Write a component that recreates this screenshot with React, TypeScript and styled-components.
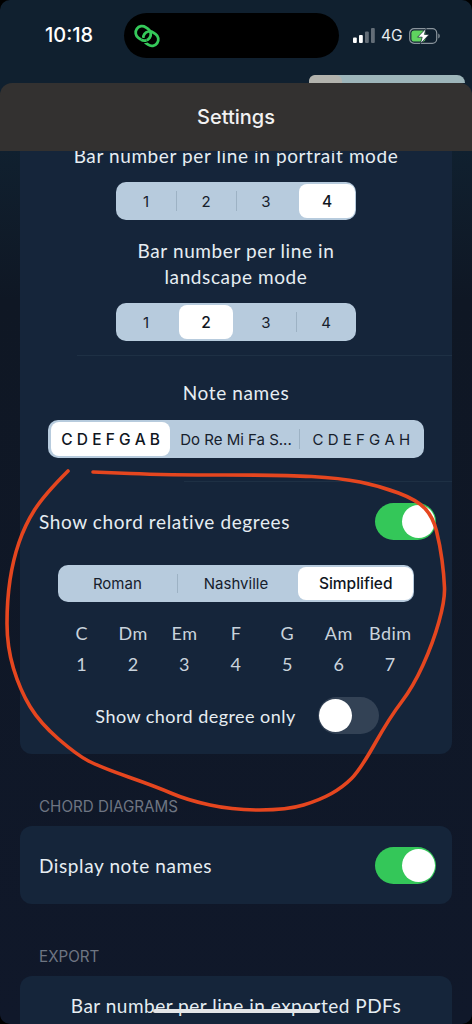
import styled, { createGlobalStyle } from 'styled-components';

const GlobalStyle = createGlobalStyle`
  html, body {
    margin: 0;
    padding: 0;
    background: #000;
  }
  * {
    box-sizing: border-box;
  }
`;

const CHORDS = [
  ['C', '1'],
  ['Dm', '2'],
  ['Em', '3'],
  ['F', '4'],
  ['G', '5'],
  ['Am', '6'],
  ['Bdim', '7'],
];

// the red pen stroke, smoothed through these points when drawn
const PEN_POINTS = [
  [68, 471], [44, 495], [25, 525], [13, 560], [7, 600], [7, 647], [20, 690], [40, 723],
  [77, 755], [100, 767], [157, 787], [187, 800], [233, 810], [287, 810], [320, 800],
  [343, 787], [360, 770], [390, 717], [413, 687], [433, 643], [445, 600], [444, 575],
  [440, 545], [433, 517], [417, 500], [380, 486], [340, 478], [283, 475], [167, 475], [93, 472],
];

function penPath(points) {
  let d = `M${points[0][0]} ${points[0][1]}`;
  for (let i = 1; i < points.length - 1; i++) {
    const midX = (points[i][0] + points[i + 1][0]) / 2;
    const midY = (points[i][1] + points[i + 1][1]) / 2;
    d += ` Q${points[i][0]} ${points[i][1]} ${midX} ${midY}`;
  }
  const last = points[points.length - 1];
  return `${d} L${last[0]} ${last[1]}`;
}

function Segmented({ options, active, width, height = 38, fontSize = 15, dividers = [] }) {
  return (
    <SegmentedWrapper $width={width} $height={height}>
      {options.map((option, index) => (
        <Segment key={option} $divider={dividers.includes(index)} $fontSize={fontSize}>
          {index === active ? (
            <ActiveSegment $last={index === options.length - 1}>{option}</ActiveSegment>
          ) : (
            option
          )}
        </Segment>
      ))}
    </SegmentedWrapper>
  );
}

function Toggle({ on }) {
  return (
    <ToggleTrack $on={on}>
      <ToggleKnob />
    </ToggleTrack>
  );
}

function LinkedRings() {
  return (
    <svg width="28" height="24" viewBox="0 0 28 24" fill="none" stroke="#35c95a" strokeWidth="3">
      <g transform="translate(14 12) rotate(35) scale(0.92)">
        <rect x="-13.5" y="-7" width="17" height="14" rx="7" />
        <rect x="-3.5" y="-7" width="17" height="14" rx="7" />
        <path d="M2.23 4.01A7 7 0 0 1-2.89 6.97" stroke="#000" strokeWidth="5.4" />
        <path d="M2.23 4.01A7 7 0 0 1-2.89 6.97" />
      </g>
    </svg>
  );
}

function App() {
  return (
    <>
      <GlobalStyle />
      <Screen>
        <StatusBar>
          <Time>10:18</Time>
          <Island>
            <LinkedRings />
          </Island>
          <StatusRight>
            <svg width="22" height="15" viewBox="0 0 22 15" fill="#fff">
              <rect x="0" y="9.5" width="3.8" height="5.5" rx="1" />
              <rect x="6" y="7" width="3.8" height="8" rx="1" />
              <rect x="12" y="3.5" width="3.8" height="11.5" rx="1" opacity="0.35" />
              <rect x="18" y="0" width="3.8" height="15" rx="1" opacity="0.35" />
            </svg>
            <Network>4G</Network>
            <svg width="31" height="16" viewBox="0 0 31 16" fill="none">
              <rect x="0.7" y="0.7" width="27" height="14.6" rx="4.4" stroke="#8a949c" strokeWidth="1.2" />
              <rect x="2.4" y="2.4" width="14" height="11.2" rx="2.8" fill="#5fd35f" />
              <path d="M29.3 5.6c1 .4 1.4 1.3 1.4 2.4s-.4 2-1.4 2.4z" fill="#8a949c" />
              <path d="M17.2 0.2L8.6 9.2h4.6l-1.8 6.6 8.8-9.4h-4.8z" fill="#fff" stroke="#10202f" strokeWidth="0.7" />
            </svg>
          </StatusRight>
        </StatusBar>
        <PeekRow>
          <Peek>
            <PeekThumb />
          </Peek>
        </PeekRow>
        <Header>Settings</Header>
        <Body>
          <TopCard>
            <CenterLabel $bottom={13}>Bar number per line in portrait mode</CenterLabel>
            <Segmented options={['1', '2', '3', '4']} active={3} width={240} dividers={[1, 2]} />
            <CenterLabel $top={18} $bottom={13}>
              Bar number per line in
              <br />
              landscape mode
            </CenterLabel>
            <Segmented options={['1', '2', '3', '4']} active={1} width={240} dividers={[3]} />
            <Divider $inset={57} $top={14} />
            <CenterLabel $top={24} $bottom={14}>Note names</CenterLabel>
            <Segmented
              options={['C D E F G A B', 'Do Re Mi Fa S...', 'C D E F G A H']}
              active={0}
              width={376}
              dividers={[2]}
            />
            <Divider $inset={164} $top={23} />
            <SwitchRow>
              <RowText>Show chord relative degrees</RowText>
              <Toggle on />
            </SwitchRow>
            <SegmentSpacer>
              <Segmented options={['Roman', 'Nashville', 'Simplified']} active={2} width={356} height={37} dividers={[1]} />
            </SegmentSpacer>
            <ChordGrid>
              {CHORDS.map(([chord, degree]) => (
                <ChordColumn key={chord}>
                  <span>{chord}</span>
                  <span>{degree}</span>
                </ChordColumn>
              ))}
            </ChordGrid>
            <DegreeRow>
              <DegreeText>Show chord degree only</DegreeText>
              <Toggle on={false} />
            </DegreeRow>
          </TopCard>

          <SectionTitle>CHORD DIAGRAMS</SectionTitle>
          <Card>
            <DiagramRow>
              <RowText>Display note names</RowText>
              <Toggle on />
            </DiagramRow>
          </Card>

          <SectionTitle>EXPORT</SectionTitle>
          <Card>
            <ExportLabel>Bar number per line in exported PDFs</ExportLabel>
          </Card>
        </Body>

        <PenStroke viewBox="0 0 472 1024" fill="none">
          <path d={penPath(PEN_POINTS)} stroke="#e5461f" strokeWidth="3.6" strokeLinecap="round" strokeLinejoin="round" />
        </PenStroke>
        <HomeIndicator />
      </Screen>
    </>
  );
}

const Screen = styled.div`
  position: relative;
  width: 472px;
  height: 1024px;
  overflow: hidden;
  border-radius: 10px;
  background: linear-gradient(180deg, #10202f 0, #10202f 150px, #0f1724 300px, #10182a 1024px);
  font-family: Lato, 'Noto Sans', sans-serif;
  color: #e6edf2;
`;

const StatusBar = styled.div`
  height: 75px;
  padding: 13px 0 0 45px;
  display: flex;
  align-items: flex-start;
`;

const Time = styled.div`
  width: 79px;
  height: 45px;
  line-height: 44px;
  font-family: Inter, sans-serif;
  font-size: 20px;
  font-weight: 500;
  color: #fff;
`;

const Island = styled.div`
  width: 215px;
  height: 45px;
  border-radius: 23px;
  background: #000;
  display: flex;
  align-items: center;
  padding-left: 9px;
`;

const StatusRight = styled.div`
  height: 45px;
  margin-left: 14px;
  display: flex;
  align-items: center;
  gap: 6px;
`;

const Network = styled.span`
  font-family: Inter, sans-serif;
  font-size: 15.5px;
  font-weight: 400;
  color: #e8edf0;
`;

const PeekRow = styled.div`
  height: 8px;
  display: flex;
  justify-content: flex-end;
  padding-right: 7px;
`;

const Peek = styled.div`
  width: 156px;
  height: 8px;
  border-radius: 8px 8px 0 0;
  background: #9db5ba;
`;

const PeekThumb = styled.div`
  width: 33px;
  height: 8px;
  border-radius: 6px 6px 0 0;
  background: #b3b3ad;
`;

const Header = styled.div`
  position: relative;
  z-index: 2;
  height: 68px;
  border-radius: 12px 12px 0 0;
  background: #333130;
  display: flex;
  align-items: center;
  justify-content: center;
  font-family: Inter, sans-serif;
  font-size: 20px;
  font-weight: 500;
  color: #f2f2f2;
`;

const Body = styled.div`
  padding: 0 20px;
`;

const Card = styled.div`
  border-radius: 12px;
  background: #15253a;
`;

const TopCard = styled(Card)`
  margin-top: -24px;
  height: 627px;
  padding-top: 16px;
  display: flex;
  flex-direction: column;
  align-items: center;
  border-radius: 0 0 12px 12px;
`;

const CenterLabel = styled.div`
  margin-top: ${(p) => p.$top || 0}px;
  margin-bottom: ${(p) => p.$bottom}px;
  font-size: 19px;
  line-height: 26px;
  letter-spacing: 0.6px;
  text-align: center;
  color: #e6edf2;
`;

const SegmentedWrapper = styled.div`
  flex: none;
  width: ${(p) => p.$width}px;
  height: ${(p) => p.$height}px;
  border-radius: 10px;
  background: #b7cbdd;
  display: flex;
`;

const Segment = styled.div`
  position: relative;
  flex: 1 1 0;
  min-width: 0;
  display: flex;
  align-items: center;
  justify-content: center;
  white-space: nowrap;
  font-family: Inter, sans-serif;
  font-size: ${(p) => p.$fontSize}px;
  font-weight: 400;
  color: #16202c;

  &::before {
    content: '';
    display: ${(p) => (p.$divider ? 'block' : 'none')};
    position: absolute;
    left: 0;
    top: 9px;
    bottom: 9px;
    width: 1px;
    background: #9db2c4;
  }
`;

const ActiveSegment = styled.div`
  align-self: stretch;
  flex: 1;
  margin: 2px ${(p) => (p.$last ? 1 : 3)}px 2px 3px;
  border-radius: 8px;
  background: #fff;
  display: flex;
  align-items: center;
  justify-content: center;
  font-size: 15.5px;
  font-weight: 500;
  color: #10161e;
`;

const Divider = styled.div`
  align-self: stretch;
  height: 1px;
  margin-top: ${(p) => p.$top}px;
  margin-left: ${(p) => p.$inset}px;
  background: #1e3044;
`;

const SwitchRow = styled.div`
  align-self: stretch;
  margin-top: 21px;
  padding: 0 16px 0 19px;
  display: flex;
  align-items: center;
  justify-content: space-between;
`;

const RowText = styled.span`
  font-size: 19px;
  letter-spacing: 0.6px;
  color: #e6edf2;
`;

const DegreeText = styled.span`
  font-size: 18px;
  letter-spacing: 0.45px;
  color: #e6edf2;
`;

const SegmentSpacer = styled.div`
  margin-top: 25px;
`;

const ChordGrid = styled.div`
  margin-top: 20px;
  width: 360px;
  display: grid;
  grid-template-columns: repeat(7, 1fr);
`;

const ChordColumn = styled.div`
  display: flex;
  flex-direction: column;
  align-items: center;
  gap: 9px;
  font-size: 18px;
  line-height: 22px;
  letter-spacing: 0.5px;
  color: #c9d3dc;
`;

const DegreeRow = styled.div`
  margin-top: 22px;
  margin-left: 2px;
  display: flex;
  align-items: center;
  gap: 22px;
`;

const ToggleTrack = styled.div`
  flex: none;
  width: 61px;
  height: 37px;
  padding: 2px 1px;
  border-radius: 19px;
  background: ${(p) => (p.$on ? '#34c759' : '#334255')};
  display: flex;
  justify-content: ${(p) => (p.$on ? 'flex-end' : 'flex-start')};
`;

const ToggleKnob = styled.div`
  width: 33px;
  height: 33px;
  border-radius: 50%;
  background: #fff;
`;

const SectionTitle = styled.div`
  margin-top: 44px;
  margin-bottom: 10px;
  padding-left: 19px;
  font-family: Inter, sans-serif;
  font-size: 15.2px;
  line-height: 18px;
  color: #6e7582;
`;

const DiagramRow = styled.div`
  height: 78px;
  padding: 0 16px 0 19px;
  display: flex;
  align-items: center;
  justify-content: space-between;
`;

const ExportLabel = styled.div`
  height: 80px;
  padding-top: 17px;
  font-size: 19px;
  line-height: 26px;
  letter-spacing: 0.5px;
  text-align: center;
  color: #e6edf2;
`;

const PenStroke = styled.svg`
  position: absolute;
  inset: 0;
  z-index: 3;
  width: 472px;
  height: 1024px;
  pointer-events: none;
`;

const HomeIndicator = styled.div`
  position: absolute;
  z-index: 3;
  left: 153px;
  top: 1009px;
  width: 167px;
  height: 4px;
  border-radius: 2px;
  background: #e4e6e8;
`;

export default App;
